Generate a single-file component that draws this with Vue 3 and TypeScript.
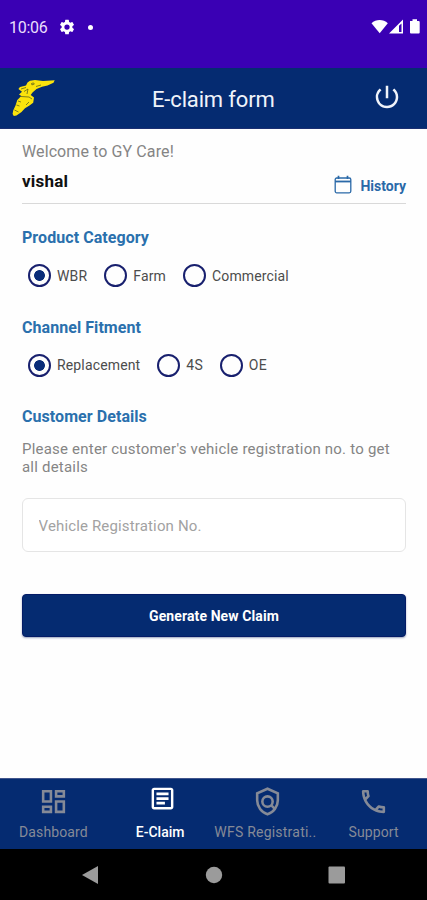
<script setup lang="ts">
import { ref } from 'vue'

interface RadioGroup {
  title: string
  name: string
  options: string[]
}

const groups: RadioGroup[] = [
  { title: 'Product Category', name: 'category', options: ['WBR', 'Farm', 'Commercial'] },
  { title: 'Channel Fitment', name: 'fitment', options: ['Replacement', '4S', 'OE'] },
]

const selected = ref<Record<string, string>>({ category: 'WBR', fitment: 'Replacement' })
const registration = ref('')
</script>

<template>
  <div class="screen">
    <div class="status">
      <span class="clock">10:06</span>
      <svg class="gear" viewBox="0 0 24 24"><path fill-rule="evenodd" d="M19.14 12.94c.04-.3.06-.61.06-.94s-.02-.64-.07-.94l2.03-1.58a.49.49 0 0 0 .12-.61l-1.92-3.32a.49.49 0 0 0-.59-.22l-2.39.96a7 7 0 0 0-1.62-.94l-.36-2.54a.48.48 0 0 0-.48-.41h-3.84a.47.47 0 0 0-.47.41l-.36 2.54c-.59.24-1.13.57-1.62.94l-2.39-.96a.48.48 0 0 0-.59.22L2.74 8.87a.47.47 0 0 0 .12.61l2.03 1.58a6 6 0 0 0 0 1.88l-2.03 1.58a.49.49 0 0 0-.12.61l1.92 3.32c.12.22.37.29.59.22l2.39-.96c.5.38 1.03.7 1.62.94l.36 2.54c.05.24.24.41.48.41h3.84c.24 0 .44-.17.47-.41l.36-2.54a6.7 6.7 0 0 0 1.62-.94l2.39.96c.22.08.47 0 .59-.22l1.92-3.32a.47.47 0 0 0-.12-.61zM12 15.5a3.5 3.5 0 1 1 0-7 3.5 3.5 0 0 1 0 7z" /></svg>
      <i class="dot"></i>
      <svg class="signals" viewBox="0 0 50 16">
        <path d="M.5 4.200C5-.1 12.300-.1 16.800 4.200L8.700 14.200z" />
        <path fill-rule="evenodd" d="M32 .5V14.500H18zM28 6.700V13h2.500V4.600z" />
        <path d="M39 2h2.500V.3h4.500V2h1.700q1 0 1 1v10.500q0 1-1 1h-7.700q-1 0-1-1V3Q39 2 39 2z" />
      </svg>
    </div>

    <header class="appbar">
      <svg class="logo" viewBox="0 0 44 38">
        <path d="M18 1.700L23 1 31 2 42.700 1.200 41.500 3.800 35.500 6.500 30 7.800 24.500 10 20.500 13.500 18.700 16 22 18.500 21.200 23.700 17.500 26.500 13 29.300 9.500 33 4.500 36.500 1.800 37 .6 35 1.200 31.500 3.500 26.500 5.300 21 9.300 17 7 15.500 10 12.700 6.400 10 8 8 14 6.500 15.500 3.500z" fill="#fbe30c" />
        <path d="M19.500 4.500l2-.6.8 1.200-2.400.8zM9 10l5-1.500M12 12.500l4-2.500M24 7.500l5-1.500M9 17.500l8 .500 3 2M6 22l3 1M4.500 26l3 1M14 26l3-3M16 10l-1 5M2.500 31l4 2" fill="none" stroke="#4a5420" stroke-width=".7" />
      </svg>
      <h1>E-claim form</h1>
      <svg class="power" viewBox="0 0 24 24"><path d="M13 3h-2v10h2V3zm4.830 2.170-1.420 1.420A6.920 6.920 0 0 1 19 12c0 3.870-3.130 7-7 7A6.995 6.995 0 0 1 7.580 6.580L6.170 5.170A8.932 8.932 0 0 0 3 12a9 9 0 0 0 18 0c0-2.740-1.230-5.180-3.170-6.830z" /></svg>
    </header>

    <main class="content">
      <div class="user">
        <div>
          <p class="welcome">Welcome to GY Care!</p>
          <p class="username">vishal</p>
        </div>
        <a class="history">
          <svg viewBox="0 0 18 19" fill="none" stroke="currentColor"><rect x="1.200" y="3" width="15.600" height="14.800" rx="1.500" stroke-width="1.300" /><path d="M1 6.500h16" stroke-width="1.800" /><path d="M4.500.7V4M13.500.7V4" stroke-width="1.700" /></svg>
          <span>History</span>
        </a>
      </div>

      <section v-for="group in groups" :key="group.name" class="group">
        <h2>{{ group.title }}</h2>
        <div class="options">
          <label v-for="option in group.options" :key="option">
            <input v-model="selected[group.name]" type="radio" :name="group.name" :value="option" />
            <span>{{ option }}</span>
          </label>
        </div>
      </section>

      <section class="customer">
        <h2>Customer Details</h2>
        <p>Please enter customer's vehicle registration no. to get<br />all details</p>
        <input v-model="registration" class="field" type="text" placeholder="Vehicle Registration No." />
        <button type="button">Generate New Claim</button>
      </section>
    </main>

    <nav class="tabs">
      <a>
        <svg viewBox="0 0 24 24"><path d="M19 5v2h-4V5h4M9 5v6H5V5h4m10 8v6h-4v-6h4M9 17v2H5v-2h4M21 3h-8v6h8V3zM11 3H3v10h8V3zm10 8h-8v10h8V11zm-10 4H3v6h8v-6z" /></svg>
        <span>Dashboard</span>
      </a>
      <a class="active">
        <svg viewBox="0 0 24 24"><path d="M19 5v14H5V5h14m0-2H5c-1.100 0-2 .9-2 2v14c0 1.100.9 2 2 2h14c1.100 0 2-.9 2-2V5c0-1.100-.9-2-2-2z" /><path d="M14 17H7v-2.300h7v2.300zm3-3.700H7v-2.300h10v2.300zm0-4H7V7h10v2.300z" /></svg>
        <span>E-Claim</span>
      </a>
      <a class="clipped">
        <svg viewBox="0 0 24 24" class="line"><path d="M12 2.100l8 3.550V11c0 5-3.400 9.600-8 10.900C7.400 20.600 4 16 4 11V5.650z" /><circle cx="12" cy="12" r="4" /><path d="M14.800 14.800l3.300 3.300" /></svg>
        <span>WFS Registrati..</span>
      </a>
      <a>
        <svg viewBox="0 0 24 24"><path d="M6.540 5c.06.89.21 1.760.45 2.590l-1.200 1.200c-.41-1.200-.67-2.470-.76-3.790h1.510m9.860 12.020c.85.24 1.720.39 2.600.45v1.490c-1.320-.09-2.590-.35-3.800-.75l1.200-1.190M7.500 3H4c-.55 0-1 .45-1 1 0 9.390 7.610 17 17 17 .55 0 1-.45 1-1v-3.490c0-.55-.45-1-1-1-1.240 0-2.450-.2-3.570-.57a.84.84 0 0 0-.31-.05c-.26 0-.51.1-.71.29l-2.200 2.200a15.150 15.150 0 0 1-6.590-6.590l2.200-2.200c.28-.28.36-.67.25-1.020A11.360 11.360 0 0 1 8.500 4c0-.55-.45-1-1-1z" /></svg>
        <span>Support</span>
      </a>
    </nav>

    <div class="system">
      <svg viewBox="0 0 18 20"><path d="M16 1v18L0 10z" /></svg>
      <svg viewBox="0 0 18 20"><circle cx="9" cy="10" r="8.200" /></svg>
      <svg viewBox="0 0 18 20"><rect x=".5" y="1.500" width="16.500" height="17" rx="1" /></svg>
    </div>
  </div>
</template>

<style>
body {
  margin: 0;
  background: #fff;
}
</style>

<style scoped>
.screen {
  display: flex;
  flex-direction: column;
  width: 427px;
  height: 900px;
  overflow: hidden;
  background: #fefefe;
  font-family: Roboto, "Liberation Sans", sans-serif;
}
.screen * {
  box-sizing: border-box;
}
h1,
h2,
p {
  margin: 0;
}
.status {
  display: flex;
  align-items: center;
  height: 68px;
  padding: 0 6px 14px 9px;
  background: #3a00b4;
  color: #e9defc;
  fill: #fff;
}
.clock {
  width: 49px;
  padding-top: 2px;
  font-size: 16px;
  letter-spacing: -0.3px;
  line-height: 20px;
}
.gear {
  width: 18px;
  height: 18px;
}
.dot {
  width: 5px;
  height: 5px;
  margin-left: 12px;
  border-radius: 50%;
  background: #fff;
}
.signals {
  width: 50px;
  height: 16px;
  margin-left: auto;
}
.appbar {
  display: flex;
  align-items: center;
  height: 61px;
  padding: 0 25px 0 12px;
  background: #052b71;
  border-bottom: 1px solid #1b2f72;
}
.logo {
  width: 44px;
  height: 38px;
}
h1 {
  flex: 1;
  padding: 4px 0 0 96px;
  color: #f0f3fa;
  font-size: 22px;
  font-weight: 400;
  letter-spacing: -0.15px;
  line-height: 26px;
}
.power {
  width: 30px;
  height: 30px;
  margin-bottom: 3px;
  fill: #f0f3fa;
}
.content {
  flex: 1;
  padding: 13px 21px 0 22px;
}
.user {
  display: flex;
  align-items: flex-end;
  justify-content: space-between;
  height: 62px;
  border-bottom: 1px solid #d9d9d9;
}
.welcome {
  color: #858585;
  font-size: 16px;
  letter-spacing: 0.1px;
  line-height: 20px;
}
.username {
  margin-top: 9px;
  padding-bottom: 12px;
  color: #111;
  font-size: 17px;
  font-weight: 700;
  letter-spacing: 0.2px;
  line-height: 20px;
}
.history {
  display: flex;
  align-items: center;
  gap: 8px;
  padding-bottom: 7px;
  color: #2a69a8;
  font-size: 14px;
  font-weight: 700;
  line-height: 18px;
}
.history svg {
  width: 18px;
  height: 19px;
  margin-bottom: 2px;
}
h2 {
  color: #2a70ad;
  font-size: 16px;
  font-weight: 700;
  letter-spacing: 0.06px;
  line-height: 20px;
}
.group {
  height: 89.500px;
  padding-top: 24px;
}
.options {
  display: flex;
  gap: 17px;
  padding: 16px 0 0 6px;
}
label {
  display: flex;
  align-items: center;
  gap: 6px;
  height: 23px;
  color: #4c4c4c;
  font-size: 14px;
  letter-spacing: 0.15px;
}
label input {
  appearance: none;
  width: 23px;
  height: 23px;
  margin: 0;
  border: 2px solid #18206e;
  border-radius: 50%;
}
label input:checked {
  background: radial-gradient(circle, #092c79 5px, transparent 5.800px);
}
.customer {
  display: flex;
  flex-direction: column;
  padding-top: 24px;
}
.customer p {
  margin-top: 13px;
  color: #858585;
  font-size: 15px;
  letter-spacing: 0.21px;
  line-height: 18px;
  white-space: nowrap;
}
.field {
  height: 54px;
  margin-top: 22px;
  padding: 2px 15.500px 0;
  border: 1px solid #e5e5e5;
  border-radius: 6px;
  background: #fff;
  font: 15px Roboto, sans-serif;
  letter-spacing: 0.15px;
}
.field::placeholder {
  color: #a2a2a2;
  opacity: 1;
}
button {
  height: 43px;
  margin-top: 42px;
  border: 1px solid #041b66;
  border-radius: 4px;
  background: #052b71;
  box-shadow: 0 1px 2px #9aa4bd;
  color: #fff;
  font: 700 14px Roboto, sans-serif;
  letter-spacing: 0.1px;
}
.tabs {
  display: grid;
  grid-template-columns: repeat(4, 1fr);
  height: 71px;
  background: #052b71;
  border-top: 1px solid #41558c;
}
.tabs a {
  display: flex;
  flex-direction: column;
  align-items: center;
  color: #858a97;
  fill: currentColor;
  font-size: 14px;
  letter-spacing: 0.1px;
  line-height: 18px;
  white-space: nowrap;
}
.tabs svg {
  width: 31px;
  height: 31px;
  margin: 7px 0 6px;
}
.tabs .line {
  fill: none;
  stroke: currentColor;
  stroke-width: 2;
}
.tabs .clipped {
  padding-right: 3px;
  letter-spacing: 0.22px;
}
.tabs .clipped svg {
  margin-left: 4px;
}
.tabs .active {
  color: #fff;
  font-weight: 500;
  letter-spacing: 0;
}
.tabs .active svg {
  width: 29px;
  margin: 4px 0 9px 5px;
}
.system {
  display: flex;
  align-items: center;
  justify-content: center;
  gap: 105px;
  height: 51px;
  background: #000;
  fill: #9b9b9b;
}
.system svg {
  width: 18px;
  height: 20px;
}
</style>
